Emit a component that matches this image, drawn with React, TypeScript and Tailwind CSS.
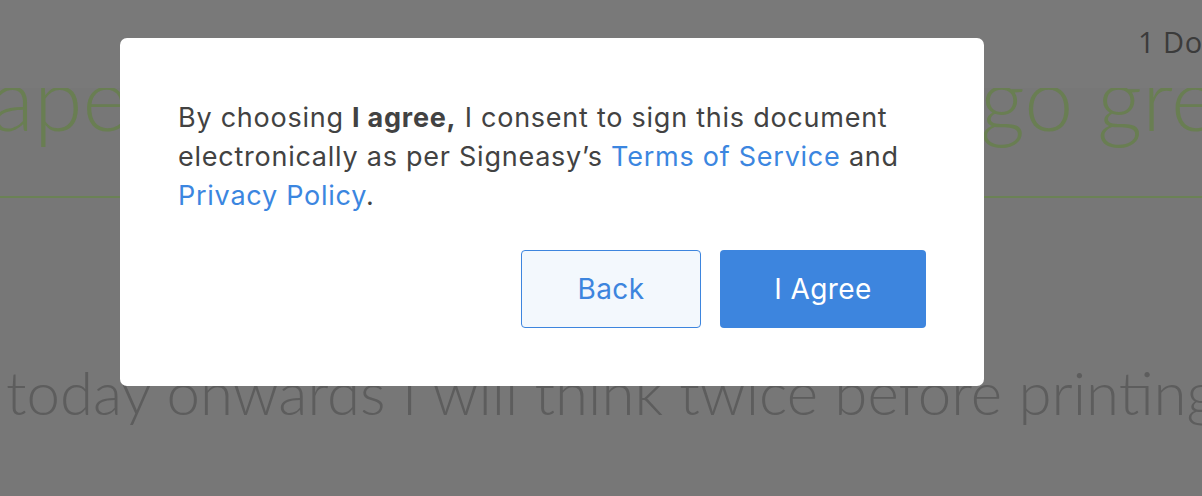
export default function App() {
  return (
    <div className="relative h-[496px] w-[1202px] overflow-hidden bg-[#797979] font-['Lato',sans-serif]">
      {/* Dimmed page behind the dialog */}
      <div className="flex h-[88px] items-start pl-[1138px] pt-[20px]">
        <span className="whitespace-nowrap text-[29px] tracking-[0.5px] text-[#3b3b3b] font-['Open_Sans',sans-serif]">
          1 Document
        </span>
      </div>
      <div className="h-[408px] bg-[#777777]">
        <div className="h-[108px] overflow-hidden">
          <div className="-mt-[51px] flex whitespace-nowrap text-[88px] font-light leading-[120px] text-[#697e52]">
            <span className="-ml-[58px] w-[1038px] shrink-0 overflow-hidden">Paper, save trees and</span>
            <span className="shrink-0">go green</span>
          </div>
        </div>
        <div className="h-[2px] bg-[#6b8255]" />
        <div className="pl-[6px] pt-[164px] whitespace-nowrap text-[60px] font-light leading-[60px] text-[#5d5d5d]">
          today onwards I will think twice before printing
        </div>
      </div>

      {/* Dialog */}
      <div className="absolute left-[120px] top-[38px] w-[864px] rounded-[7px] bg-white px-[58px] pb-[58px] pt-[60px] font-['Inter',sans-serif]">
        <p className="text-[27px] leading-[39px] tracking-[0.75px] text-[#424242]">
          By choosing <strong className="font-bold">I agree,</strong> I consent to sign this document
          electronically as per Signeasy’s{' '}
          <a className="text-[#3b86e0]">Terms of Service</a> and{' '}
          <a className="text-[#3b86e0]">Privacy Policy</a>.
        </p>
        <div className="mt-[35px] flex justify-end gap-[19px]">
          <button className="h-[78px] w-[180px] rounded-[4px] border border-[#3d85de] bg-[#f3f8fd] text-[28px] tracking-[0.4px] text-[#3d85de]">
            Back
          </button>
          <button className="h-[78px] w-[206px] rounded-[4px] bg-[#3d85de] text-[28px] tracking-[0.4px] text-white">
            I Agree
          </button>
        </div>
      </div>
    </div>
  )
}
